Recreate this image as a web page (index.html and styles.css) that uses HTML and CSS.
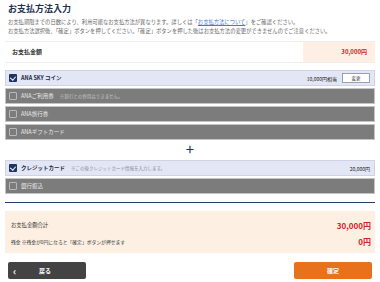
FILE: index.html
```html
<!DOCTYPE html>
<html lang="ja">
<head>
	<meta charset="UTF-8">
	<title>お支払方法入力</title>
	<link rel="stylesheet" href="styles.css">
</head>
<body>
	<div class="page">
		<h1 class="ttl">お支払方法入力</h1>
		<p class="desc">お支払期限までの日数により、利用可能なお支払方法が異なります。詳しくは「<a href="#">お支払方法について</a>」をご確認ください。<br>お支払方法選択後、「確定」ボタンを押してください。「確定」ボタンを押した後はお支払方法の変更ができませんのでご注意ください。</p>

		<div class="amount">
			<div class="amount-l">お支払金額</div>
			<div class="amount-r">30,000円</div>
		</div>

		<ul class="pay">
			<li class="row on">
				<span class="chk"></span>
				<span class="name">ANA SKY コイン</span>
				<span class="val">10,000円相当</span>
				<span class="btn-s">変更</span>
			</li>
			<li class="row off">
				<span class="chk"></span>
				<span class="name">ANAご利用券</span>
				<span class="note">※割引との併用はできません。</span>
			</li>
			<li class="row off">
				<span class="chk"></span>
				<span class="name">ANA旅行券</span>
			</li>
			<li class="row off">
				<span class="chk"></span>
				<span class="name">ANAギフトカード</span>
			</li>
		</ul>

		<div class="plus">+</div>

		<ul class="pay">
			<li class="row on">
				<span class="chk"></span>
				<span class="name">クレジットカード</span>
				<span class="note">※この後クレジットカード情報を入力します。</span>
				<span class="val">20,000円</span>
			</li>
			<li class="row off">
				<span class="chk"></span>
				<span class="name">銀行振込</span>
			</li>
		</ul>

		<div class="line"></div>

		<div class="total">
			<div class="trow">
				<span class="tl">お支払金額合計</span>
				<span class="tr">30,000円</span>
			</div>
			<div class="trow">
				<span class="tl">残金 ※残金が0円になると「確定」ボタンが押せます</span>
				<span class="tr">0円</span>
			</div>
		</div>

		<div class="btns">
			<a class="back" href="#"><span class="arr">&lsaquo;</span><span class="lbl">戻る</span></a>
			<a class="ok" href="#">確定</a>
		</div>
	</div>
</body>
</html>
```
FILE: styles.css
```css
*{
	margin: 0;
	padding: 0;
}
body{
	font-family: "Noto Sans CJK JP", "Noto Sans", sans-serif;
	color: #333;
	background: #fff;
}
.page{
	width: 370px;
	padding: 3px 5px 0;
}
.ttl{
	font-size: 9px;
	line-height: 11px;
	color: #233250;
	padding-left: 3px;
}
.desc{
	font-size: 5.3px;
	line-height: 9px;
	color: #666;
	padding: 4px 0 0 3px;
	white-space: nowrap;
	height: 23px;
}
.desc a{
	color: #4a78c2;
	text-decoration: underline;
}
.amount{
	display: flex;
	height: 20px;
	border-top: 1px solid #eee;
	border-bottom: 1px solid #eee;
}
.amount-l{
	flex: 1;
	font-size: 6px;
	font-weight: bold;
	line-height: 20px;
	padding-left: 7px;
}
.amount-r{
	width: 64px;
	background: #fdefe4;
	color: #c8242b;
	font-size: 6px;
	font-weight: bold;
	line-height: 20px;
	text-align: right;
	padding-right: 8px;
}
.pay{
	list-style: none;
	display: flex;
	flex-direction: column;
	gap: 2px;
}
.pay:first-of-type{
	margin-top: 7px;
}
.row{
	display: flex;
	align-items: center;
	height: 14px;
	border: 1px solid #c8c8c8;
	padding: 0 4px 0 3px;
	font-size: 5.5px;
}
.row.on{
	background: #e3e6f4;
	border-color: #cfd3e4;
}
.row.off{
	background: #7c7c7c;
	border-color: #c4c4c4;
	color: #e6e6e6;
}
.chk{
	width: 8px;
	height: 8px;
	border-radius: 1px;
	box-sizing: border-box;
	margin-right: 4px;
	position: relative;
}
.on .chk{
	background: #1f3566;
}
.on .chk::after{
	content: "";
	position: absolute;
	left: 2px;
	top: 1px;
	width: 2.5px;
	height: 4px;
	border: solid #fff;
	border-width: 0 1.2px 1.2px 0;
	transform: rotate(40deg);
}
.off .chk{
	border: 1px solid #b8b8b8;
}
.name{
	font-weight: bold;
	color: #1c2a48;
}
.off .name{
	color: #e8e8e8;
	font-weight: normal;
}
.note{
	font-size: 4.5px;
	color: #8a8fa0;
	margin-left: 6px;
}
.off .note{
	color: #c4c4c4;
}
.val{
	margin-left: auto;
	font-size: 5px;
	color: #222;
}
.btn-s{
	margin-left: 5px;
	width: 26px;
	height: 8px;
	border: 1px solid #9aa0b0;
	background: #fff;
	font-size: 4.5px;
	line-height: 8px;
	text-align: center;
	color: #333;
}
.plus{
	text-align: center;
	font-size: 15px;
	line-height: 16px;
	height: 19px;
	color: #1f3050;
	padding-top: 1px;
}
.line{
	height: 1px;
	background: #24406b;
	margin: 8px 0 8px;
}
.total{
	background: #fdefe2;
	height: 42px;
	padding: 6px 4px 0 6px;
	box-sizing: border-box;
}
.trow{
	display: flex;
	justify-content: space-between;
	align-items: center;
	height: 16px;
}
.tl{
	font-size: 4.8px;
	color: #333;
}
.trow:first-child .tl{
	font-size: 5.3px;
}
.tr{
	font-size: 8px;
	font-weight: bold;
	color: #d0242b;
}
.btns{
	display: flex;
	justify-content: space-between;
	margin: 9px 3px 0 3px;
}
.btns a{
	height: 17px;
	width: 78px;
	border-radius: 2px;
	color: #fff;
	text-decoration: none;
	font-size: 6px;
	font-weight: bold;
	line-height: 17px;
	display: flex;
	align-items: center;
}
.back{
	background: #434343;
	padding-left: 5px;
	box-sizing: border-box;
}
.arr{
	font-size: 10px;
	width: 24px;
}
.lbl{
	margin-left: 2px;
}
.ok{
	background: #e8721c;
	justify-content: center;
}
```
